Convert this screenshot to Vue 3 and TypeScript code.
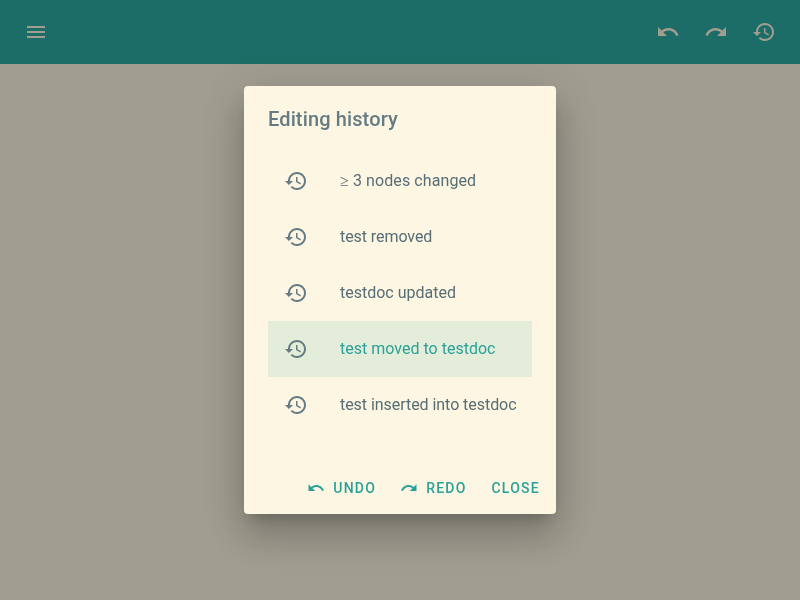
<script setup lang="ts">
import { ref } from 'vue'

interface Entry {
  mark?: string
  text: string
  tracking: number
}

const icons = {
  menu: 'M3 18h18v-2H3v2zm0-5h18v-2H3v2zm0-7v2h18V6H3z',
  undo: 'M12.5 8c-2.65 0-5.05.99-6.9 2.6L2 7v9h9l-3.62-3.62c1.39-1.16 3.16-1.88 5.12-1.88 3.54 0 6.55 2.31 7.6 5.5l2.37-.78C21.08 11.03 17.15 8 12.5 8z',
  redo: 'M18.4 10.6C16.55 8.99 14.15 8 11.5 8c-4.65 0-8.58 3.03-9.96 7.22L3.9 16c1.05-3.19 4.05-5.5 7.6-5.5 1.95 0 3.73.72 5.12 1.88L13 16h9V7l-3.6 3.6z',
  history: 'M13 3c-4.97 0-9 4.03-9 9H1l3.89 3.89.07.14L9 12H6c0-3.87 3.13-7 7-7s7 3.13 7 7-3.13 7-7 7c-1.93 0-3.68-.79-4.94-2.06l-1.42 1.42C8.27 19.99 10.51 21 13 21c4.97 0 9-4.03 9-9s-4.03-9-9-9zm-1 5v5l4.28 2.54.72-1.21-3.5-2.08V8H12z',
}

const entries: Entry[] = [
  { mark: '≥', text: ' 3 nodes changed', tracking: 0.09 },
  { text: 'test removed', tracking: -0.07 },
  { text: 'testdoc updated', tracking: 0 },
  { text: 'test moved to testdoc', tracking: 0.01 },
  { text: 'test inserted into testdoc', tracking: -0.05 },
]
const current = ref<number>(3)
</script>

<template>
  <div class="screen">
    <header class="bar">
      <svg class="icon" viewBox="0 0 24 24"><path :d="icons.menu" /></svg>
      <div class="tools">
        <svg class="icon" viewBox="0 0 24 24"><path :d="icons.undo" /></svg>
        <svg class="icon" viewBox="0 0 24 24"><path :d="icons.redo" /></svg>
        <svg class="icon" viewBox="0 0 24 24"><path :d="icons.history" /></svg>
      </div>
    </header>
    <div class="overlay">
      <section class="dialog" role="dialog">
        <h2>Editing history</h2>
        <ul>
          <li v-for="(entry, i) in entries" :key="entry.text" :class="{ selected: i === current }" @click="current = i">
            <svg class="icon" viewBox="0 0 24 24"><path :d="icons.history" /></svg>
            <span class="label" :style="{ letterSpacing: entry.tracking + 'px' }"><span v-if="entry.mark" class="mark">{{ entry.mark }}</span>{{ entry.text }}</span>
          </li>
        </ul>
        <footer>
          <button><svg viewBox="0 0 24 24"><path :d="icons.undo" /></svg>Undo</button>
          <button><svg viewBox="0 0 24 24"><path :d="icons.redo" /></svg>Redo</button>
          <button>Close</button>
        </footer>
      </section>
    </div>
  </div>
</template>

<style>
body { margin: 0; }
</style>

<style scoped>
.screen {
  height: 100vh;
  background: #eee8d5;
  font-family: Roboto, "Liberation Sans", sans-serif;
  overflow: hidden;
}
.bar {
  box-sizing: border-box;
  height: 64px;
  padding: 0 24px;
  display: flex;
  align-items: center;
  justify-content: space-between;
  background: #2aa198;
  color: #eee8d5;
}
.tools { display: flex; gap: 24px; }
svg { fill: currentColor; display: block; flex: none; }
.icon { width: 24px; height: 24px; }
.overlay {
  position: fixed;
  inset: 0;
  display: flex;
  align-items: center;
  justify-content: center;
  background: rgba(0, 0, 0, 0.32);
}
.dialog {
  width: 312px;
  height: 428px;
  border-radius: 4px;
  background: #fdf6e3;
  color: #657b83;
  box-shadow: 0 11px 15px -7px rgba(0, 0, 0, 0.2), 0 24px 38px 3px rgba(0, 0, 0, 0.14), 0 9px 46px 8px rgba(0, 0, 0, 0.12);
}
h2 {
  margin: 0;
  padding: 17px 24px 15px;
  font-size: 20px;
  line-height: 32px;
  font-weight: 500;
  letter-spacing: 0.13px;
}
ul { list-style: none; margin: 0; padding: 3px 24px 29px; }
li {
  height: 56px;
  display: flex;
  align-items: center;
  gap: 32px;
  padding: 0 16px;
  font-size: 16px;
  white-space: nowrap;
}
.label { color: #586e75; line-height: 20px; }
.mark { font-family: "Liberation Serif", serif; line-height: 1; }
li.selected { background: #e4edd9; }
li.selected .label { color: #2aa198; }
footer { display: flex; justify-content: flex-end; gap: 8px; padding: 8px; }
button {
  height: 36px;
  padding: 0 8px;
  border: 0;
  background: none;
  display: flex;
  align-items: center;
  color: #2aa198;
  font: 500 14px Roboto, "Liberation Sans", sans-serif;
  letter-spacing: 1.25px;
  text-transform: uppercase;
}
button svg { width: 18px; height: 18px; margin-right: 8px; }
button:nth-child(2) { padding-right: 8.8px; }
</style>
